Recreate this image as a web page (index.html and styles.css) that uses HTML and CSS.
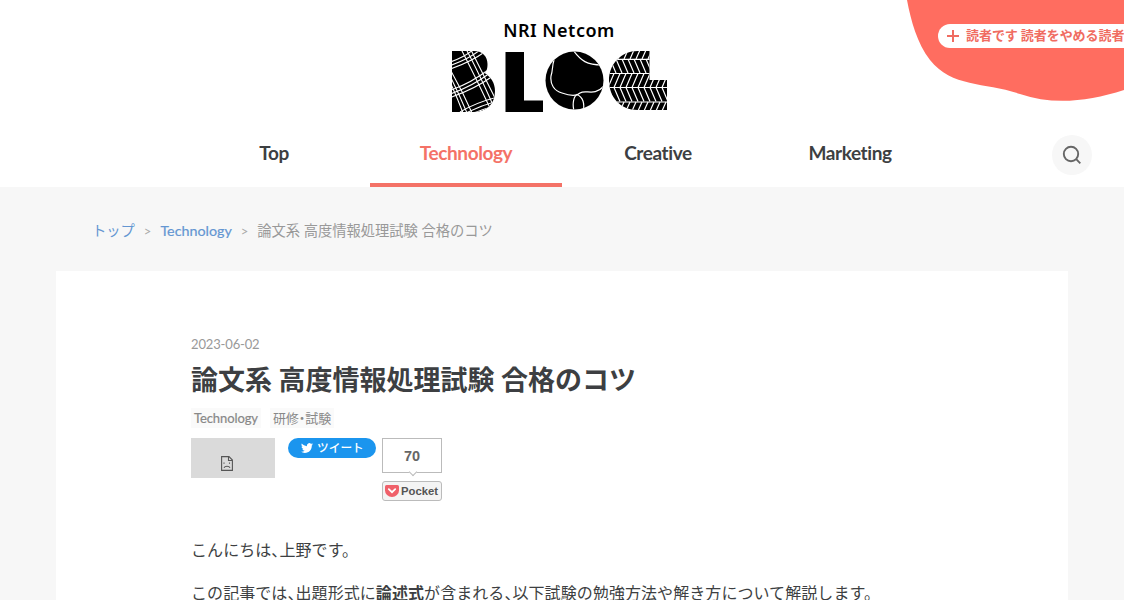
FILE: index.html
```html
<!DOCTYPE html>
<html lang="ja">
<head>
<meta charset="utf-8">
<title>論文系 高度情報処理試験 合格のコツ - NRI Netcom BLOG</title>
<link rel="stylesheet" href="styles.css">
</head>
<body>
<header class="header">
  <a class="brand">
    <span class="brand-name">NRI Netcom</span>
    <svg class="logo" viewBox="451 51 217 62" role="img" aria-label="BLOG">
      <defs>
        <clipPath id="b"><path d="M452 51H474C483 51 487.500 57 487.500 64C487.500 69 486.500 71 484.500 73C491 77 495 83 495 91C495 104 487 112 473 112H452Z"/></clipPath>
        <clipPath id="o"><circle cx="574.500" cy="80.500" r="29"/></clipPath>
        <clipPath id="g"><path d="M638 51H649.500V80H667V110H638C620 110 609 97 609 80.500S621 51 638 51Z"/></clipPath>
      </defs>
      <g clip-path="url(#b)">
        <path d="M450 50h50v65h-50z"/>
        <g class="cut plaid">
          <path d="M450 62Q465 57 474 49M450 65.500Q468 59.500 480 50M450 69Q471 62 486 51"/>
          <path d="M450 90.500Q471 83 488 70M450 94Q472 86.500 490 73M450 97.500Q474 89.500 493 76"/>
          <path d="M460 112Q477 102 498 97M466 113Q482 105 498 101M474 113Q484 109 498 105"/>
          <path d="M461 49Q473 72 490 108M466 49Q477 69 493 105M470 48Q482 72 496 100"/>
          <path d="M450 82Q457 97 463 113M450 76Q459 94 467 113M451 71Q463 92 472 113"/>
        </g>
      </g>
      <path d="M505.500 52H524V100.500H543V112H505.500Z"/>
      <circle cx="574.500" cy="80.500" r="29"/>
      <g class="cut ball" clip-path="url(#o)">
        <path d="M573 50C581 61 587 65 602 65M554 60C552 66 553 70 551 76C550 84 554 91 562 93C570 96 576 97 580 93C586 89 594 97 604 86"/>
        <path d="M574 111C572 103 574 96 577 94.500C583 97 585 104 583 111"/>
      </g>
      <g clip-path="url(#g)">
        <path d="M608 50h60v62h-60z"/>
        <g class="cut tread">
          <path d="M608 59.300H650M608 73.500H650M608 87.500H668M608 102H668"/>
          <path d="M618 59l4-9m2 9l4-9m2 9l4-9m2 9l4-9m2 9l4-9m2 9l4-9"/>
          <path d="M610 59l6 14m0-14l6 14m0-14l6 14m0-14l6 14m0-14l6 14m0-14l6 14m0-14l6 14"/>
          <path d="M608 87.500l6-14m0 14l6-14m0 14l6-14m0 14l6-14m0 14l6-14m0 14l6-14m0 14l6-14m0 14l6-14m0 14l6-14m0 14l6-14"/>
          <path d="M608 87.500l6 14m0-14l6 14m0-14l6 14m0-14l6 14m0-14l6 14m0-14l6 14m0-14l6 14m0-14l6 14m0-14l6 14m0-14l6 14"/>
          <path d="M614 111l4-9m2 9l4-9m2 9l4-9m2 9l4-9m2 9l4-9m2 9l4-9m2 9l4-9m2 9l4-9m2 9l4-9"/>
        </g>
      </g>
    </svg>
  </a>
  <nav class="nav">
    <a class="nav-item">Top</a>
    <a class="nav-item active">Technology</a>
    <a class="nav-item">Creative</a>
    <a class="nav-item">Marketing</a>
  </nav>
  <button class="search" aria-label="検索">
    <svg viewBox="0 0 20 20"><circle cx="9" cy="9" r="7.200"/><path d="M14.200 14.200L18.300 18.300"/></svg>
  </button>
  <div class="corner">
    <svg class="blob" viewBox="0 0 218 102"><path d="M1 0C5 21 11 43 24 60C46 88 80 82 114 94C146 105 181 102 218 90V0Z"/></svg>
    <a class="subscribe"><svg viewBox="0 0 12 12"><path d="M6 0V12M0 6H12"/></svg><span>読者です 読者をやめる読者</span></a>
  </div>
</header>
<div class="breadcrumb">
  <a class="crumb-top">トップ</a><i class="sep">&gt;</i><a class="crumb-cat">Technology</a><i class="sep">&gt;</i><span class="crumb-title">論文系 高度情報処理試験 合格のコツ</span>
</div>
<main class="entry">
  <time class="date">2023-06-02</time>
  <h1 class="title">論文系 高度情報処理試験 合格のコツ</h1>
  <div class="tags"><a class="tag-en">Technology</a><a class="tag-ja">研修・試験</a></div>
  <div class="social">
    <div class="broken">
      <svg viewBox="0 0 12 15"><path d="M.6.600H8L11.400 4V14.400H.6ZM7.500.600V4.500H11.400M3 6.500V7.700M8.500 6.500V7.700M3 11.800C4 9.800 8 9.800 9 11.800"/></svg>
    </div>
    <a class="tweet"><svg viewBox="0 0 24 24"><path d="M23.950 4.570a10 10 0 0 1-2.820.77 4.960 4.960 0 0 0 2.160-2.720c-.95.550-2 .950-3.130 1.180a4.920 4.920 0 0 0-8.380 4.480C7.690 8.100 4.070 6.130 1.640 3.160a4.820 4.820 0 0 0-.67 2.480c0 1.710.87 3.210 2.190 4.100a4.900 4.900 0 0 1-2.230-.62v.06a4.920 4.920 0 0 0 3.950 4.830 5 5 0 0 1-2.210.08 4.940 4.940 0 0 0 4.600 3.420A9.870 9.870 0 0 1 0 19.540a14 14 0 0 0 7.550 2.210c9.050 0 14-7.500 14-13.980 0-.21 0-.42-.02-.63a9.940 9.940 0 0 0 2.420-2.570z"/></svg><span>ツイート</span></a>
    <div class="pocket">
      <div class="count">70</div>
      <div class="pocket-btn"><svg viewBox="0 0 14 12"><path class="bag" d="M1.500 0H12.500Q14 0 14 1.500V5.500A7 6.500 0 0 1 0 5.500V1.500Q0 0 1.500 0Z"/><path class="check" d="M3.800 4.200L7 7.200L10.200 4.200"/></svg><span>Pocket</span></div>
    </div>
  </div>
  <div class="body">
    <p class="hello">こんにちは、上野です。</p>
    <p class="intro">この記事では、出題形式に<strong>論述式</strong>が含まれる、以下試験の勉強方法や解き方について解説します。</p>
  </div>
</main>
</body>
</html>
```
FILE: styles.css
```css
* { box-sizing: border-box; }
body {
  margin: 0;
  height: 600px;
  overflow: hidden;
  background: #f7f7f7;
  color: #3d3f42;
  font-family: Lato, "Noto Sans CJK JP", sans-serif;
  font-feature-settings: "halt";
  white-space: nowrap;
}
svg { display: block; flex: none; }
.header {
  position: relative;
  height: 187px;
  padding-top: 20px;
  background: #fff;
}
.brand { display: flex; flex-direction: column; align-items: center; }
.brand-name {
  height: 31px;
  line-height: 21px;
  font-family: "Noto Sans", sans-serif;
  font-size: 18px;
  font-weight: 600;
  letter-spacing: .5px;
  color: #000;
  padding-right: 6px;
}
.logo { width: 217px; height: 62px; margin-right: 5px; }
.cut { fill: none; stroke: #fff; stroke-width: .9; }
.plaid { stroke-width: 1.1; }
.ball { stroke-width: 1.2; }
.tread { stroke-width: 1.2; }
.nav { display: flex; margin: 7px 0 0 178px; }
.nav-item {
  width: 192px;
  height: 67px;
  padding-top: 21px;
  line-height: 24px;
  text-align: center;
  font-size: 19px;
  font-weight: 700;
  letter-spacing: -.4px;
}
.active { color: #f47267; border-bottom: 4px solid #f47267; }
.search {
  position: absolute;
  left: 1052px;
  top: 135px;
  width: 40px;
  height: 40px;
  padding: 10px;
  border: 0;
  border-radius: 50%;
  background: #f7f7f7;
}
.search svg { width: 20px; height: 20px; fill: none; stroke: #666; stroke-width: 1.9; }
.corner { position: absolute; right: 0; top: 0; width: 218px; height: 102px; overflow: hidden; }
.blob { width: 218px; height: 102px; fill: #ff6d60; }
.subscribe {
  position: absolute;
  left: 32px;
  top: 24px;
  width: 200px;
  height: 24px;
  padding-left: 9px;
  display: flex;
  align-items: center;
  gap: 7px;
  border-radius: 12px;
  background: #fff;
  color: #f06c61;
  font-size: 13px;
  font-weight: 700;
}
.subscribe svg { width: 12px; height: 12px; stroke: #f06c61; stroke-width: 2; }
.subscribe span { padding-bottom: 3px; letter-spacing: -.06px; }
.breadcrumb {
  display: flex;
  align-items: center;
  height: 84px;
  padding: 1px 0 0 92px;
  font-size: 14.3px;
  color: #999;
}
.breadcrumb a { color: #6496d2; }
.crumb-cat { padding-top: 2px; -webkit-text-stroke: .2px; }
.crumb-title { letter-spacing: -.03px; }
.sep { width: 25.5px; padding-top: 2px; text-align: center; font-style: normal; font-size: 13px; color: #aaa; }
.entry {
  width: 1012px;
  height: 345px;
  margin-left: 56px;
  padding: 64px 135px 0;
  background: #fff;
}
.date { display: block; line-height: 18px; font-size: 13px; letter-spacing: -.15px; color: #999; }
.title { margin: 8px 0 0; line-height: 38px; font-size: 27px; font-weight: 700; }
.tags { display: flex; gap: 9px; height: 20px; margin-top: 9px; line-height: 20px; font-size: 13px; color: #888; }
.tags a { background: #fafafa; padding: 0 3px; }
.tag-en { letter-spacing: -.1px; -webkit-text-stroke: .2px; }
.tag-ja { letter-spacing: -.05px; }
.social { display: flex; align-items: flex-start; height: 63px; margin-top: 10px; }
.broken { width: 84px; height: 40px; margin-right: 13px; padding: 18px 0 0 30px; background: #dadada; }
.broken svg { width: 12px; height: 15px; fill: none; stroke: #555; stroke-width: 1.1; }
.tweet {
  display: flex;
  align-items: center;
  gap: 4px;
  width: 88px;
  height: 20px;
  margin-right: 6px;
  padding-left: 13px;
  border-radius: 10px;
  background: #1b95ee;
  color: #fff;
  font-size: 11.7px;
  line-height: 18px;
  font-weight: 500;
}
.tweet span { padding-bottom: 2px; }
.tweet svg { width: 12px; height: 12px; fill: #fff; }
.pocket { width: 60px; }
.count {
  position: relative;
  height: 35px;
  border: 1px solid #bbb;
  text-align: center;
  font: 700 14.5px/34px "Liberation Sans", sans-serif;
  color: #666;
}
.count::after {
  content: "";
  position: absolute;
  left: 27px;
  bottom: -3px;
  width: 5px;
  height: 5px;
  background: #fff;
  border: solid #bbb;
  border-width: 0 1px 1px 0;
  transform: rotate(45deg);
}
.pocket-btn {
  display: flex;
  align-items: center;
  gap: 2px;
  height: 20px;
  margin-top: 8px;
  padding: 0 0 1px 2px;
  border: 1px solid #bbb;
  border-radius: 3px;
  background: #f4f4f4;
  font: 700 11.3px "Liberation Sans", sans-serif;
  color: #555;
}
.pocket-btn svg { width: 14px; height: 12px; }
.bag { fill: #f0606a; }
.check { fill: none; stroke: #fff; stroke-width: 1.8; stroke-linecap: round; }
.body { padding-top: 34px; font-size: 16px; line-height: 30px; letter-spacing: .07px; }
.body p { margin: 0 0 13px; }
```
